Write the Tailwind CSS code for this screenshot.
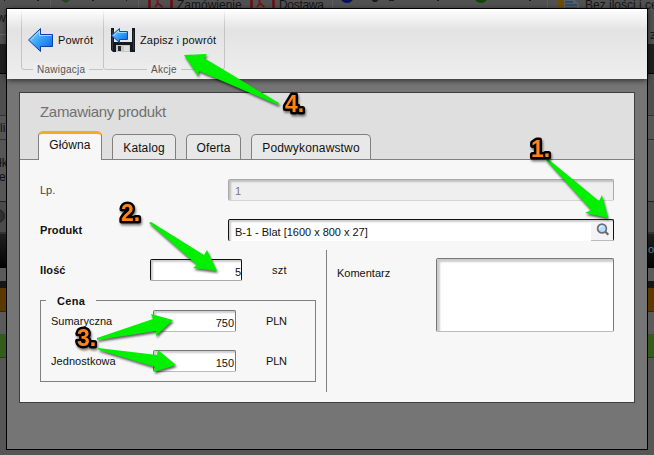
<!DOCTYPE html>
<html lang="pl">
<head>
<meta charset="utf-8">
<title>Zamawiany produkt</title>
<script src="https://cdn.jsdelivr.net/npm/@tailwindcss/browser@4"></script>
</head>
<body class="relative h-[455px] w-[654px] overflow-hidden bg-[#565656] font-['Liberation_Sans',Arial,sans-serif] text-[11px] leading-[14px] text-[#111]">

<!-- dimmed page under the dialog -->
<div class="flex h-full flex-col" aria-hidden="true">
  <div class="relative h-[44px] shrink-0 bg-[#515151] text-[12px] text-[#151515]">
    <svg class="absolute left-0 top-0" width="654" height="44">
      <path d="M50.500 0V9M138.500 0V9M332.500 0V9M547.500 0V9" stroke="#5e5e5e"/>
      <path d="M0 34.500H6" stroke="#696969"/>
      <path d="M61 0l5 3 4-3z" fill="#2c411d"/>
      <path d="M4 0h1M37 0h2M92 0h2M126 0h1M373 0l4 0-1 1h-2zM389 0h5M437 0h2M529 0h2" stroke="#1b1b1b" stroke-width="2"/>
      <path d="M149.500 0V10M171.500 0V10M251.500 0V10M273.500 0V10" stroke="#6c0d10" stroke-width="2.500"/>
      <path d="M155 7l2.500-3V0M157.500 3l5 4M257 7l2.500-3V0M259.500 3l5 4" stroke="#7b1114" fill="none" stroke-width="1.800"/>
      <circle cx="347" cy="-4" r="7" fill="#06115f"/>
      <circle cx="481" cy="-4" r="7" fill="#124508"/>
      <path d="M558 0h6v10h-6z" fill="#704c08"/>
      <path d="M564 0h11l4 4v6h-15z" fill="#53616d"/>
      <path d="M565 2h8M565 5h12M565 8h12" stroke="#1e3548"/>
    </svg>
    <span class="absolute left-[177px] -top-[2px]">Zamówienie</span>
    <span class="absolute left-[279px] -top-[2px] tracking-[-0.3px]">Dostawa</span>
    <span class="absolute left-[585px] -top-[2px] whitespace-nowrap">Bez ilości i cen</span>
    <span class="absolute -left-[3px] top-[11px]">w</span>
    <span class="absolute left-[650px] top-[28px]">z</span>
  </div>
  <div class="h-[30px] shrink-0 border-b border-black bg-[#202020]"></div>
  <div class="h-[42px] shrink-0 border-b border-[#333] bg-[#4e4e4e]"></div>
  <div class="h-[24px] shrink-0 border-b border-[#333] bg-[#565656] pt-[5px] text-[12px]">li.</div>
  <div class="flex h-[62px] shrink-0 flex-col justify-start overflow-hidden border-b border-[#222] bg-[#565656] pt-[16px] text-[12px] leading-[14px]"><span class="-ml-[1px]">łk</span><span class="-ml-[1px]">ef</span></div>
  <div class="relative h-[30px] shrink-0 overflow-hidden bg-[#4b4b4b]"><div class="absolute -left-[9px] top-[7px] size-[14px] rounded-full border border-[#222] bg-[#303030]"></div></div>
  <div class="h-[36px] shrink-0 border-t-2 border-[#333] bg-linear-to-b from-[#202020] to-[#050505] pl-[648px] pt-[8px] text-[#777]">o</div>
  <div class="h-[13px] shrink-0 bg-[#5b5b5b]"></div>
  <div class="h-[7px] shrink-0 bg-[#171717]"></div>
  <div class="h-[24px] shrink-0 border-b border-[#392500] bg-[#5b3900]"></div>
  <div class="h-[22px] shrink-0 bg-[#5a5a5a]"></div>
  <div class="h-[24px] shrink-0 border-b border-[#23400f] bg-[#365c1c]"></div>
  <div class="grow bg-[#565656]"></div>
</div>

<!-- dialog -->
<div class="absolute left-[6px] top-[8px] flex h-[442px] w-[642px] flex-col border border-black bg-[#757575]">
  <div class="z-10 flex h-[70px] shrink-0 bg-linear-to-b from-white from-0% via-[#e3e3e3] via-30% to-[#eeeeee] pl-[14px] shadow-[0_1px_6px_#000000b3]">
    <div class="relative flex h-[61px] w-[82px] pl-[6px] pt-[18px]">
      <div class="absolute inset-0 rounded-bl-[3px] border-b border-l border-[#c4c4c4] mask-t-from-70%"></div>
      <svg width="26" height="26" viewBox="0 0 26 26" class="shrink-0">
        <defs><linearGradient id="blue" x1="0" y1="0" x2="1" y2="1"><stop offset="0" stop-color="#9de0ff"/><stop offset=".5" stop-color="#35a0f7"/><stop offset="1" stop-color="#075ee6"/></linearGradient></defs>
        <path d="M1.500 13L13.500 1.500V7.500H25.500V19.500H13.500V24.500Z" fill="url(#blue)" stroke="#0b3fae" stroke-linejoin="round"/>
        <path d="M3.500 13L12.500 4.200V8.500H24.500" fill="none" stroke="#b6eaff" opacity=".8"/>
      </svg>
      <span class="ml-[5px] mt-[6px] tracking-[0.15px]">Powrót</span>
      <span class="absolute bottom-[-7px] left-[12px] bg-[#ededed] px-[4px] text-[10px] tracking-[0.25px] text-[#555]">Nawigacja</span>
    </div>
    <div class="relative flex h-[61px] w-[122px] pl-[7px] pt-[18px]">
      <div class="absolute inset-0 rounded-b-[3px] border-x border-b border-[#c4c4c4] mask-t-from-70%"></div>
      <svg width="26" height="26" viewBox="0 0 26 26" class="shrink-0">
        <path d="M1 1H25V25H3L1 23Z" fill="#15181d"/>
        <path d="M4 1H22V15H4Z" fill="#e8e8e8"/>
        <path d="M2.500 3v20M23.500 4v19" stroke="#343941"/>
        <path d="M6 18H20V25H6Z" fill="#c5c7c9"/>
        <path d="M8 19H11V24H8Z" fill="#24272c"/>
        <path d="M14 19h5v5h-5z" fill="#dedede"/>
        <path d="M1.500 8.500L9.500 1.500V4.500H17.500V12.500H9.500V15.500Z" fill="url(#blue)" stroke="#0b4abf" stroke-linejoin="round"/>
        <path d="M3.500 8.500L8.500 3.800V5.500H16.500" fill="none" stroke="#b6eaff" opacity=".8"/>
      </svg>
      <span class="ml-[4px] mt-[6px] whitespace-nowrap tracking-[0.15px]">Zapisz i powrót</span>
      <span class="absolute bottom-[-7px] left-[44px] bg-[#ededed] px-[4px] text-[10px] tracking-[0.25px] text-[#555]">Akcje</span>
    </div>
  </div>

  <div class="ml-[12px] mt-[13px] flex h-[311px] w-[616px] flex-col border border-[#3e3e3e] bg-[#f7f7f7]">
    <div class="flex h-[67px] shrink-0 flex-col border-b border-[#808080] bg-[#dfdfdf]">
      <h1 class="pl-[20px] pt-[9px] text-[15px] leading-[20px] tracking-[-0.3px] text-[#707070]">Zamawiany produkt</h1>
      <div class="-mb-px mt-auto flex items-end gap-[10px] pl-[18px] text-[12px]">
        <div class="h-[29px] w-[64px] rounded-t-[5px] border-x border-t-[3px] border-x-[#808080] border-t-[#fdaa18] bg-[#f7f7f7] pt-[4px] text-center tracking-[0.1px]">Główna</div>
        <div class="h-[26px] w-[64px] rounded-t-[5px] border border-b-0 border-[#808080] bg-[#e8e8e8] pt-[6px] text-center tracking-[0.1px] shadow-[inset_0_-1px_0_#808080]">Katalog</div>
        <div class="h-[26px] w-[55px] rounded-t-[5px] border border-b-0 border-[#808080] bg-[#e8e8e8] pt-[6px] text-center tracking-[0.1px] shadow-[inset_0_-1px_0_#808080]">Oferta</div>
        <div class="h-[26px] w-[120px] rounded-t-[5px] border border-b-0 border-[#808080] bg-[#e8e8e8] pt-[6px] text-center tracking-[0.15px] shadow-[inset_0_-1px_0_#808080]">Podwykonawstwo</div>
      </div>
    </div>
    <div class="flex flex-col pl-[20px] pt-[19px]">
      <div class="flex h-[40px]">
        <label class="w-[188px] pt-[4px] text-[#444]">Lp.</label>
        <div class="h-[22px] w-[386px] rounded-[2px] border border-[#aaa] border-b-[#d4d4d4] bg-[#efefef] pl-[6px] pt-[4px] text-[#777] shadow-[inset_2px_2px_2px_#00000033]">1</div>
      </div>
      <div class="flex h-[31px]">
        <label class="w-[188px] pt-[4px] font-bold tracking-[0.1px]">Produkt</label>
        <div class="flex h-[22px] w-[386px] rounded-[2px] border border-b-0 border-[#111] bg-white pl-[6px] shadow-[inset_2px_2px_2px_#00000033]">
          <span class="mt-[5px] grow whitespace-nowrap tracking-[-0.02px]">B-1 - Blat [1600 x 800 x 27]</span>
          <div class="mt-[2px] flex w-[22px] justify-center border-b border-[#bbb] bg-[#f4f4f4] pl-[2px]">
            <svg width="16" height="16" viewBox="0 0 16 16" class="shrink-0"><circle cx="7" cy="6.500" r="4.400" fill="#b8dbff" stroke="#6a6f78" stroke-width="1.700"/><path d="M4.500 6.500a2.500 2.500 0 0 1 3-2.300" stroke="#eef8ff" fill="none"/><path d="M10.300 9.800L13.300 12.700" stroke="#666" stroke-width="2.200"/></svg>
          </div>
        </div>
      </div>
      <div class="flex h-[142px]">
        <div class="w-[286px] pt-[9px]">
          <div class="flex h-[41px]">
            <label class="w-[110px] pt-[4px] font-bold tracking-[0.1px]">Ilość</label>
            <div class="h-[22px] w-[92px] rounded-[2px] border border-[#111] border-b-[#aaa] bg-white pt-[5px] text-right shadow-[inset_2px_2px_2px_#00000033]">5</div>
            <span class="ml-[30px] mt-[4px] tracking-[0.2px]">szt</span>
          </div>
          <div class="relative h-[82px] w-[276px] border border-[#808080] pl-[10px] pt-[9px]">
            <span class="absolute -top-[7px] left-[5px] w-[50px] bg-[#f7f7f7] pl-[11px] font-bold tracking-[0.3px]">Cena</span>
            <div class="flex h-[40px]">
              <label class="w-[102px] pt-[4px]">Sumaryczna</label>
              <div class="h-[22px] w-[83px] rounded-[2px] border border-[#777] border-b-[#bbb] bg-white pr-px pt-[5px] text-right shadow-[inset_2px_2px_2px_#00000033]">750</div>
              <span class="ml-[30px] mt-[4px] tracking-[-0.2px]">PLN</span>
            </div>
            <div class="flex h-[40px]">
              <label class="w-[102px] pt-[4px] tracking-[0.05px]">Jednostkowa</label>
              <div class="h-[22px] w-[83px] rounded-[2px] border border-[#777] border-b-[#bbb] bg-white pr-px pt-[5px] text-right shadow-[inset_2px_2px_2px_#00000033]">150</div>
              <span class="ml-[30px] mt-[4px] tracking-[-0.2px]">PLN</span>
            </div>
          </div>
        </div>
        <div class="flex border-l border-[#808080] pl-[10px] pt-[8px]">
          <label class="w-[99px] pt-[8px]">Komentarz</label>
          <div class="h-[74px] w-[178px] rounded-[2px] border border-[#777] border-b-[#bbb] bg-white shadow-[inset_3px_3px_2px_#00000033]"></div>
        </div>
      </div>
    </div>
  </div>
</div>

<!-- step arrows and numbers laid over the dialog -->
<svg class="absolute left-0 top-0 z-20 drop-shadow-[1px_2px_1px_#00000099]" width="654" height="455">
  <g fill="#00f000">
    <path d="M184 55L207 54L204 58L279 103L278 105L199 71L198 76Z"/>
    <path d="M546 160L548 159L599 201L602 195L608 218L585 213L591 210Z"/>
    <path d="M149 223L151 222L204 255L207 250L217 271L193 268L197 265Z"/>
    <path d="M97 338L153 319L151 314L173 320L156 336L156 331L97 340Z"/>
    <path d="M98 348L157 355L158 350L176 365L154 372L155 367L99 350Z"/>
  </g>
</svg>
<svg class="absolute left-0 top-0 z-20 drop-shadow-[1px_2px_1px_#00000080]" width="654" height="455">
  <g class="font-['Liberation_Sans',Arial,sans-serif] text-[23px] font-bold [paint-order:stroke]" fill="#ff8417" stroke="#000" stroke-width="5" stroke-linejoin="round">
    <text x="531" y="157">1.</text>
    <text x="121" y="221">2.</text>
    <text x="77" y="346">3.</text>
    <text x="285" y="112">4.</text>
  </g>
</svg>
</body>
</html>
